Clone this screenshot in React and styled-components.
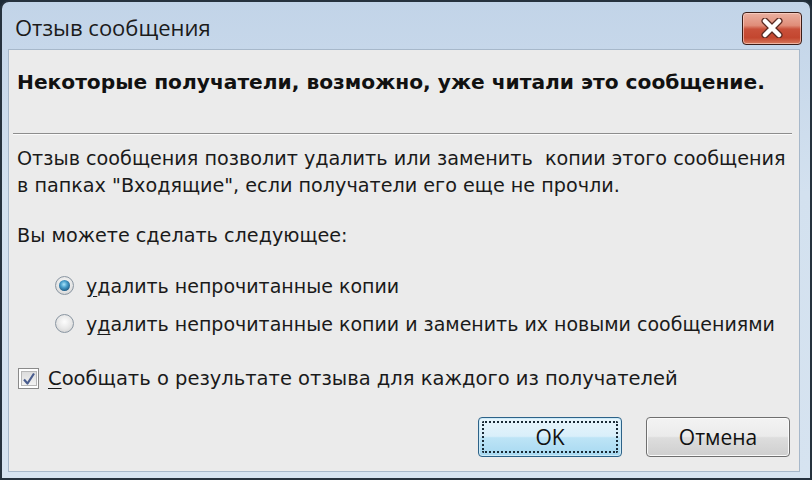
import React from "react";
import styled, { createGlobalStyle } from "styled-components";

const Global = createGlobalStyle`
  html, body { margin: 0; padding: 0; background: #1d2a36; }
  #root { width: 812px; height: 480px; }
  * { box-sizing: border-box; }
`;

const Window = styled.div`
  width: 812px;
  height: 480px;
  display: flex;
  flex-direction: column;
  border: 2px solid #26323e;
  border-radius: 9px 9px 0 0;
  background: linear-gradient(180deg, #c2d4e8 0%, #d3e1ef 40%, #d6e3f0 100%);
  padding: 0 10px 6px 6px;
  overflow: hidden;
`;

const TitleBar = styled.div`
  height: 47px;
  display: flex;
  align-items: center;
  justify-content: space-between;
  padding: 0 0 0 7px;
  flex-shrink: 0;
`;

const Title = styled.div`
  font-family: "Open Sans", "Noto Sans", sans-serif;
  font-size: 22px;
  color: #1b1b1b;
  margin-top: 2px;
`;

const CloseButton = styled.div`
  width: 60px;
  height: 33px;
  margin-top: 5px;
  margin-right: -2px;
  border: 1px solid #3b1d18;
  border-radius: 4px;
  background: linear-gradient(180deg, #eab0a1 0%, #e08d79 40%, #c9503a 52%, #c3462f 80%, #d77a5c 100%);
  box-shadow: inset 0 0 0 1px rgba(255, 220, 210, 0.6);
  display: flex;
  align-items: center;
  justify-content: center;
`;

const Client = styled.div`
  flex: 1;
  background: #ebebeb;
  border: 1px solid #a7b8ca;
  display: flex;
  flex-direction: column;
  padding: 0 8px 0 8px;
`;

const Header = styled.div`
  font-family: "DejaVu Sans", Verdana, sans-serif;
  font-weight: bold;
  font-size: 20.2px;
  line-height: 27px;
  color: #111;
  margin-top: 19px;
  white-space: nowrap;
`;

const Separator = styled.div`
  height: 2px;
  margin: 37px 0 0 -4px;
  margin-right: -1px;
  border-top: 1px solid #8d8d8d;
  border-bottom: 1px solid #fbfbfb;
`;

const Text = styled.div`
  font-family: "DejaVu Sans", Verdana, sans-serif;
  font-size: 19.2px;
  line-height: 27px;
  color: #1a1a1a;
  white-space: pre;
  margin-top: ${(p) => p.$gap}px;
`;

const OptionRow = styled.label`
  display: flex;
  align-items: center;
  gap: ${(p) => (p.$check ? 9 : 12)}px;
  height: 27px;
  margin-top: ${(p) => p.$gap}px;
  padding-left: ${(p) => p.$indent}px;
  font-family: "DejaVu Sans", Verdana, sans-serif;
  font-size: ${(p) => (p.$check ? 19.5 : 19)}px;
  color: #1a1a1a;
  white-space: pre;
`;

const Radio = styled.span`
  width: 19px;
  height: 19px;
  border-radius: 50%;
  border: 1px solid #8a96a2;
  background: radial-gradient(circle at 50% 40%, #fdfdfd 0%, #e6e6e6 55%, #c9c9c9 100%);
  display: flex;
  align-items: center;
  justify-content: center;
  flex-shrink: 0;
`;

const RadioDot = styled.span`
  width: 11px;
  height: 11px;
  border-radius: 50%;
  background: radial-gradient(circle at 45% 40%, #a9e4fa 0%, #4aa0cc 35%, #1d5a84 75%, #163f5e 100%);
`;

const CheckBox = styled.span`
  width: 21px;
  height: 21px;
  border: 1px solid #8a8a8a;
  background: #fff;
  padding: 2px;
  display: flex;
  flex-shrink: 0;
`;

const CheckInner = styled.span`
  flex: 1;
  background: linear-gradient(180deg, #dcdcdc 0%, #f3f3f3 100%);
  border: 1px solid #b7b7b7;
  display: flex;
  align-items: center;
  justify-content: center;
`;

const U = styled.span`
  text-decoration: underline;
  text-underline-offset: 3px;
`;

const Buttons = styled.div`
  display: flex;
  justify-content: flex-end;
  gap: 24px;
  margin-top: 25px;
  padding-right: 1px;
`;

const Button = styled.div`
  width: 144px;
  height: 40px;
  border-radius: 4px;
  border: 1px solid ${(p) => (p.$primary ? "#2c6288" : "#6f6f6f")};
  background: ${(p) =>
    p.$primary
      ? "linear-gradient(180deg, #e8f5fc 0%, #d9effa 48%, #bde4f6 52%, #a7d9f1 100%)"
      : "linear-gradient(180deg, #f3f3f3 0%, #ebebeb 48%, #dddddd 52%, #cfcfcf 100%)"};
  box-shadow: inset 0 0 0 1px ${(p) => (p.$primary ? "#cdeaf7" : "#fafafa")};
  display: flex;
  align-items: center;
  justify-content: center;
  padding: 3px;
  font-family: "Open Sans", "Noto Sans", sans-serif;
  font-size: 21px;
  color: #111;
`;

const Focus = styled.div`
  flex: 1;
  align-self: stretch;
  border: 2px dotted #1a2a36;
  border-radius: 2px;
  display: flex;
  align-items: center;
  justify-content: center;
`;

export default function App() {
  return (
    <>
      <Global />
      <Window>
        <TitleBar>
          <Title>Отзыв сообщения</Title>
          <CloseButton>
            <svg width="30" height="20" viewBox="0 0 30 20">
              <path
                d="M8 3 L22 17 M22 3 L8 17"
                stroke="#5a2a22"
                strokeWidth="7"
                strokeLinecap="round"
              />
              <path
                d="M8 3 L22 17 M22 3 L8 17"
                stroke="#ffffff"
                strokeWidth="4.5"
                strokeLinecap="round"
              />
            </svg>
          </CloseButton>
        </TitleBar>
        <Client>
          <Header>Некоторые получатели, возможно, уже читали это сообщение.</Header>
          <Separator />
          <Text $gap={10}>
            {"Отзыв сообщения позволит удалить или заменить  копии этого сообщения\nв папках \"Входящие\", если получатели его еще не прочли."}
          </Text>
          <Text $gap={23}>Вы можете сделать следующее:</Text>
          <OptionRow $gap={23} $indent={38}>
            <Radio>
              <RadioDot />
            </Radio>
            <span>
              <U>у</U>далить непрочитанные копии
            </span>
          </OptionRow>
          <OptionRow $gap={11} $indent={38}>
            <Radio />
            <span>
              у<U>д</U>алить непрочитанные копии и заменить их новыми сообщениями
            </span>
          </OptionRow>
          <OptionRow $gap={28} $indent={1} $check>
            <CheckBox>
              <CheckInner>
                <svg width="14" height="14" viewBox="0 0 14 14">
                  <path
                    d="M2 7.5 L5.5 11.5 L12 1.5"
                    stroke="#4a5d8e"
                    strokeWidth="2.2"
                    fill="none"
                    strokeLinejoin="round"
                  />
                </svg>
              </CheckInner>
            </CheckBox>
            <span>
              <U>С</U>ообщать о результате отзыва для каждого из получателей
            </span>
          </OptionRow>
          <Buttons>
            <Button $primary>
              <Focus>OK</Focus>
            </Button>
            <Button>Отмена</Button>
          </Buttons>
        </Client>
      </Window>
    </>
  );
}
